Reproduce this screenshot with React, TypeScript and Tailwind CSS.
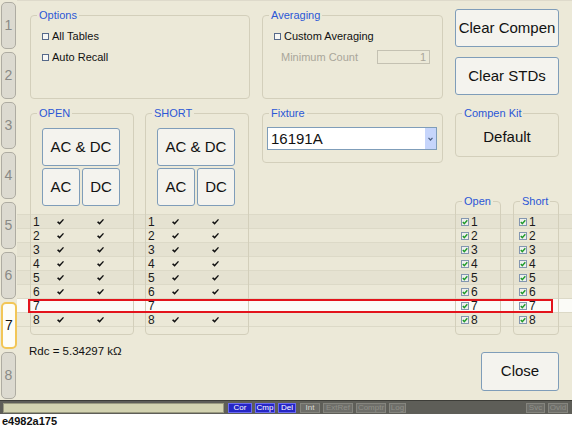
import React from 'react'

const ROWS = [1, 2, 3, 4, 5, 6, 7, 8]
const DONE = [true, true, true, true, true, true, false, true]

// row stripes inside the lower section, rows start 109px below its top
const STRIPES =
  'bg-[linear-gradient(to_bottom,transparent_0px,transparent_108px,#dcd9c7_108px,#dcd9c7_109px,#e5e2d1_109px,#e5e2d1_122px,#dcd9c7_122px,#dcd9c7_123px,#ebe8d7_123px,#ebe8d7_136px,#dcd9c7_136px,#dcd9c7_137px,#e5e2d1_137px,#e5e2d1_150px,#dcd9c7_150px,#dcd9c7_151px,#ebe8d7_151px,#ebe8d7_164px,#dcd9c7_164px,#dcd9c7_165px,#e5e2d1_165px,#e5e2d1_178px,#dcd9c7_178px,#dcd9c7_179px,#ebe8d7_179px,#ebe8d7_192px,#dcd9c7_192px,#dcd9c7_193px,#fbfbf7_193px,#fbfbf7_206px,#dcd9c7_206px,#dcd9c7_207px,#ebe8d7_207px,#ebe8d7_220px,#dcd9c7_220px,#dcd9c7_221px,transparent_221px)]'

function Group({
  title,
  className,
  children,
}: {
  title: string
  className?: string
  children?: React.ReactNode
}) {
  return (
    <fieldset className={`border border-[#d3cfbb] rounded-[4px] ${className ?? ''}`}>
      <legend className="ml-[6px] px-[2px] text-[11px] leading-[14px] text-[#2b57d6]">{title}</legend>
      {children}
    </fieldset>
  )
}

function Box() {
  return <span className="inline-block w-[7px] h-[7px] border border-[#56698a] bg-[#f7f7f4]" />
}

function Tick() {
  return (
    <svg width="7" height="6" viewBox="0 0 7 6">
      <path d="M0 3.2 L1.2 2.2 L2.6 3.5 L6 0 L7 0.8 L2.6 5.8 Z" fill="#111" />
    </svg>
  )
}

function CheckedBox() {
  return (
    <svg width="8" height="8" viewBox="0 0 8 8">
      <rect x="0.5" y="0.5" width="7" height="7" fill="#eef0ee" stroke="#8396b0" />
      <path d="M1.8 4 L3.3 5.6 L6.3 2.2" fill="none" stroke="#1f9a2a" strokeWidth="1.4" />
    </svg>
  )
}

function Btn({ className, children }: { className?: string; children: React.ReactNode }) {
  return (
    <button
      type="button"
      className={`flex items-center justify-center bg-[#f4f3ee] border border-[#7f9db9] rounded-[3px] text-[15px] text-[#111] ${className ?? ''}`}
    >
      {children}
    </button>
  )
}

function Tabs() {
  return (
    <div className="w-[17px] h-[400px] flex flex-col pt-[2px] gap-[3px] pl-[1px] bg-[#ece9d8]">
      {ROWS.map((n) => (
        <div
          key={n}
          className={
            n === 7
              ? 'w-[16px] h-[47px] rounded-[5px] border-2 border-[#f2c657] bg-[#fdfdf8] flex items-center justify-center text-[14px] text-[#111]'
              : 'w-[15px] h-[47px] rounded-[5px] border border-[#aeaca2] bg-[#dcdad0] flex items-center justify-center text-[14px] text-[#8a8a86]'
          }
        >
          {n}
        </div>
      ))}
    </div>
  )
}

function StdColumn({ title }: { title: string }) {
  return (
    <Group title={title} className="w-[104px] h-[229px]">
      <div className="pt-[8px] pl-[11px] flex flex-col gap-[2px]">
        <Btn className="w-[78px] h-[38px]">AC &amp; DC</Btn>
        <div className="flex gap-[2px]">
          <Btn className="w-[38px] h-[38px]">AC</Btn>
          <Btn className="w-[38px] h-[38px]">DC</Btn>
        </div>
      </div>
      <div className="mt-[9px] pl-[2px]">
        {ROWS.map((n, i) => (
          <div key={n} className="h-[14px] flex items-center text-[12px] text-[#1a1a1a]">
            <span className="w-[24px]">{n}</span>
            <span className="w-[40px]">{DONE[i] && <Tick />}</span>
            <span>{DONE[i] && <Tick />}</span>
          </div>
        ))}
      </div>
    </Group>
  )
}

function KitColumn({ title }: { title: string }) {
  return (
    <Group title={title} className="w-[46px] h-[141px]">
      <div className="pt-[7px] pl-[5px]">
        {ROWS.map((n) => (
          <div key={n} className="h-[14px] flex items-center gap-[2px] text-[12px] text-[#1a1a1a]">
            <CheckedBox />
            <span>{n}</span>
          </div>
        ))}
      </div>
    </Group>
  )
}

function Status({ label, tone, w }: { label: string; tone: 'on' | 'int' | 'off'; w: string }) {
  const look =
    tone === 'on'
      ? 'bg-[#2626c6] border-[#6c6cf0] text-white'
      : tone === 'int'
        ? 'bg-[#6e6e69] border-[#85857e] text-[#d9d9d2]'
        : 'bg-[#6e6e69] border-[#85857e] text-[#8f8f88]'
  return (
    <div className={`${w} h-[10px] border flex items-center justify-center text-[8px] leading-[8px] ${look}`}>
      {label}
    </div>
  )
}

export default function App() {
  return (
    <div className="w-[572px] h-[429px] bg-white font-['Liberation_Sans',Arial,sans-serif] text-[#111] overflow-hidden">
      <div className="flex">
        <Tabs />
        <div className="w-[555px] h-[400px] bg-[#ece9d8] flex flex-col border-t border-[#dedacb]">
          {/* top row */}
          <div className="h-[105px] flex items-start pt-[7px] pl-[13px]">
            <Group title="Options" className="w-[220px] h-[91px]">
              <div className="pt-[7px] pl-[11px] flex flex-col gap-[7px] text-[11px]">
                <div className="h-[14px] flex items-center gap-[3px]">
                  <Box />
                  All Tables
                </div>
                <div className="h-[14px] flex items-center gap-[3px]">
                  <Box />
                  Auto Recall
                </div>
              </div>
            </Group>
            <Group title="Averaging" className="ml-[12px] w-[181px] h-[91px]">
              <div className="pt-[7px] pl-[11px] flex flex-col gap-[7px] text-[11px]">
                <div className="h-[14px] flex items-center gap-[3px]">
                  <Box />
                  Custom Averaging
                </div>
                <div className="h-[14px] flex items-center">
                  <span className="ml-[7px] w-[96px] text-[#a9a69a]">Minimum Count</span>
                  <div className="w-[53px] h-[14px] border border-[#c4c1b2] text-right pr-[3px] leading-[12px] text-[#a9a69a]">
                    1
                  </div>
                </div>
              </div>
            </Group>
            <div className="ml-[12px] mt-[1px] w-[104px] flex flex-col gap-[10px]">
              <Btn className="w-[104px] h-[38px]">Clear Compen</Btn>
              <Btn className="w-[104px] h-[38px]">Clear STDs</Btn>
            </div>
          </div>

          {/* lower section */}
          <div className={`relative h-[232px] flex items-start pl-[13px] ${STRIPES}`}>
            <StdColumn title="OPEN" />
            <div className="ml-[11px]">
              <StdColumn title="SHORT" />
            </div>
            <Group title="Fixture" className="ml-[13px] w-[181px] h-[57px]">
              <div className="pt-[7px] pl-[4px]">
                <div className="w-[170px] h-[23px] border border-[#7f9db9] bg-white flex">
                  <span className="flex-1 pl-[3px] text-[15px] leading-[21px]">16191A</span>
                  <span className="w-[11px] bg-[#c6d5fb] flex items-center justify-center">
                    <svg width="5" height="4" viewBox="0 0 5 4">
                      <path d="M0.5 0.8 L2.5 3 L4.5 0.8" fill="none" stroke="#4d6185" strokeWidth="1.2" />
                    </svg>
                  </span>
                </div>
              </div>
            </Group>
            <div className="ml-[12px] w-[104px] flex flex-col">
              <Group title="Compen Kit" className="w-[104px] h-[51px]">
                <div className="h-[37px] flex items-center justify-center pb-[2px] text-[15px]">Default</div>
              </Group>
              <div className="mt-[37px] flex gap-[12px]">
                <KitColumn title="Open" />
                <KitColumn title="Short" />
              </div>
            </div>
            {/* selected row marker */}
            <div className="absolute left-[11px] top-[193px] w-[525px] h-[14px] border-2 border-[#e3141c]" />
          </div>

          {/* bottom row */}
          <div className="flex-1 flex justify-between">
            <div className="pl-[12px] pt-[7px] text-[11.5px] leading-[12px]">Rdc = 5.34297 kΩ</div>
            <Btn className="mt-[14px] mr-[13px] w-[78px] h-[39px]">Close</Btn>
          </div>
        </div>
      </div>

      {/* status bar */}
      <div className="h-[14px] bg-[#5e5e58] border-t border-[#3d3d38] flex items-center pl-[3px]">
        <div className="w-[221px] h-[10px] bg-[#d3d3b1] border border-[#9a9a80]" />
        <div className="ml-[4px] flex gap-[3px]">
          <Status label="Cor" tone="on" w="w-[24px]" />
          <Status label="Cmp" tone="on" w="w-[20px]" />
          <Status label="Del" tone="on" w="w-[18px]" />
        </div>
        <div className="ml-[4px] flex gap-[3px]">
          <Status label="Int" tone="int" w="w-[20px]" />
          <Status label="ExtRef" tone="off" w="w-[30px]" />
          <Status label="Comptr" tone="off" w="w-[30px]" />
          <Status label="Log" tone="off" w="w-[17px]" />
        </div>
        <div className="ml-auto mr-[4px] flex gap-[3px]">
          <Status label="Svc" tone="off" w="w-[19px]" />
          <Status label="Ovld" tone="off" w="w-[20px]" />
        </div>
      </div>

      <div className="h-[15px] pl-[2px] text-[11px] leading-[15px] font-bold text-[#111]">e4982a175</div>
    </div>
  )
}
